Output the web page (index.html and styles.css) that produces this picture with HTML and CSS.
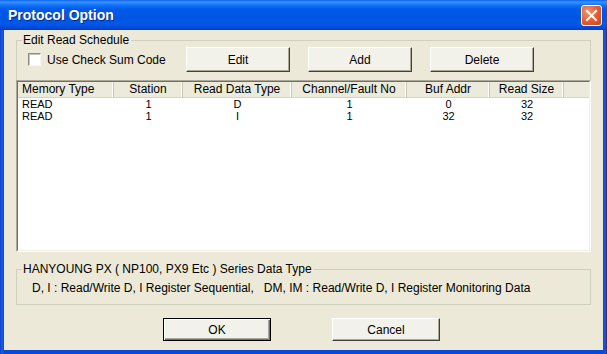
FILE: index.html
```html
<!DOCTYPE html>
<html>
<head>
<meta charset="utf-8">
<link rel="stylesheet" href="styles.css">
</head>
<body>
<div class="window">
  <div class="titlebar">
    <span class="title">Protocol Option</span>
    <span class="close"><svg width="19" height="19" viewBox="0 0 19 19"><path d="M5 5 L14 14 M14 5 L5 14" stroke="#fff" stroke-width="2" stroke-linecap="square"/></svg></span>
  </div>
  <div class="client">
    <fieldset class="group g1">
      <legend>Edit Read Schedule</legend>
      <div class="toolbar">
        <label class="check"><span class="box"></span>Use Check Sum Code</label>
        <div class="tools">
          <button class="btn">Edit</button>
          <button class="btn">Add</button>
          <button class="btn">Delete</button>
        </div>
      </div>
      <div class="list">
        <div class="list-in">
          <div class="lhead">
            <span class="first">Memory Type</span><span>Station</span><span>Read Data Type</span><span>Channel/Fault No</span><span>Buf Addr</span><span>Read Size</span><span class="rest"></span>
          </div>
          <div class="lrow">
            <span class="first">READ</span><span>1</span><span>D</span><span>1</span><span>0</span><span>32</span>
          </div>
          <div class="lrow">
            <span class="first">READ</span><span>1</span><span>I</span><span>1</span><span>32</span><span>32</span>
          </div>
        </div>
      </div>
    </fieldset>
    <fieldset class="group g2">
      <legend>HANYOUNG PX ( NP100, PX9 Etc ) Series Data Type</legend>
      <p class="note">D, I : Read/Write D, I Register Sequential,&nbsp;&nbsp;&nbsp;DM, IM : Read/Write D, I Register Monitoring Data</p>
    </fieldset>
    <div class="actions">
      <button class="btn default">OK</button>
      <button class="btn">Cancel</button>
    </div>
  </div>
</div>
</body>
</html>
```
FILE: styles.css
```css
* { box-sizing: border-box; }
html, body { margin: 0; padding: 0; }
body {
  width: 607px;
  height: 354px;
  overflow: hidden;
  font-family: "Liberation Sans", Arial, sans-serif;
  font-size: 12px;
  color: #000;
}
.window {
  width: 607px;
  height: 354px;
  display: flex;
  flex-direction: column;
  background: linear-gradient(to right, #0A3FCB 0, #1C5EE6 2px, #0A48DA 4px, #0A48DA 603px, #1757E2 605px, #0836B8 607px);
}
.titlebar {
  height: 30px;
  flex: none;
  display: flex;
  align-items: center;
  justify-content: space-between;
  padding: 0 5px 0 8px;
  background: linear-gradient(to bottom, #0A5FEE 0px, #3A93FF 2px, #1274FA 5px, #005BE8 9px, #0055E3 18px, #0058EA 24px, #0049D8 28px, #003DC8 30px);
}
.title {
  color: #fff;
  font-weight: bold;
  font-size: 14px;
  text-shadow: 1px 1px 0 #0A2A88;
}
.close {
  width: 21px;
  height: 21px;
  border: 1px solid #fff;
  border-radius: 3px;
  background: radial-gradient(circle at 30% 30%, #F29470 0, #E35B2E 55%, #CB451E 100%);
  display: flex;
  align-items: center;
  justify-content: center;
}
.client {
  flex: 1;
  margin: 0 4px 4px 4px;
  background: #ECE9D8;
  padding: 3px 12px 0 12px;
  display: flex;
  flex-direction: column;
}
.group {
  margin: 0;
  padding: 0;
  border: 1px solid #D0D0BF;
  min-width: 0;
}
.group legend {
  margin-left: 5px;
  padding: 0 2px 0 1px;
  line-height: 14px;
  height: 14px;
  font-size: 12px;
}
.toolbar {
  height: 33px;
  display: flex;
  align-items: flex-start;
  padding-left: 11px;
}
.check {
  width: 158px;
  height: 25px;
  display: flex;
  align-items: center;
  gap: 6px;
}
.box {
  width: 13px;
  height: 13px;
  background: #fff;
  border: 1px solid;
  border-color: #8E8B7E #F6F5EF #F6F5EF #8E8B7E;
  box-shadow: inset 1px 1px 0 #C7C4B5;
}
.tools {
  display: flex;
  gap: 18px;
}
.btn {
  font: inherit;
  font-size: 12px;
  color: #000;
  width: 104px;
  height: 25px;
  padding: 0;
  background: #F2F1EA;
  border: 1px solid;
  border-color: #FFFFFF #404040 #404040 #FFFFFF;
  box-shadow: inset -1px -1px 0 #ACA899;
}
.list {
  margin: 0 -1px -1px -1px;
  height: 172px;
  border: 1px solid;
  border-color: #ACA899 #FFFFFF #FFFFFF #ACA899;
}
.list-in {
  height: 100%;
  background: #fff;
  border: 1px solid;
  border-color: #716F64 #F1EFE2 #F1EFE2 #716F64;
}
.lhead, .lrow {
  display: grid;
  grid-template-columns: 96px 69px 109px 115px 83px 74px 1fr;
}
.lhead {
  height: 16px;
  background: #EBEADB;
  border-bottom: 1px solid #D6D3C2;
}
.lhead span {
  line-height: 15px;
  text-align: center;
  border-right: 1px solid #CBC7B8;
  box-shadow: inset -1px 0 0 #FFFFFF;
  white-space: nowrap;
}
.lhead .rest { border-right: none; box-shadow: none; }
.lhead .first, .lrow .first { text-align: left; padding-left: 4px; }
.lrow span {
  font-size: 11px;
  line-height: 12px;
  text-align: center;
}
.g2 {
  margin-top: 10px;
}
.note {
  margin: 0;
  padding: 6px 0 9px 15px;
  line-height: 13px;
  white-space: nowrap;
}
.actions {
  display: flex;
  gap: 61px;
  padding-left: 147px;
  margin-top: 13px;
}
.actions .btn {
  width: 108px;
  height: 23px;
}
.btn.default {
  border: 1px solid #000;
  box-shadow: inset 1px 1px 0 #FFFFFF, inset -1px -1px 0 #716F64, inset -2px -2px 0 #ACA899;
}
```
